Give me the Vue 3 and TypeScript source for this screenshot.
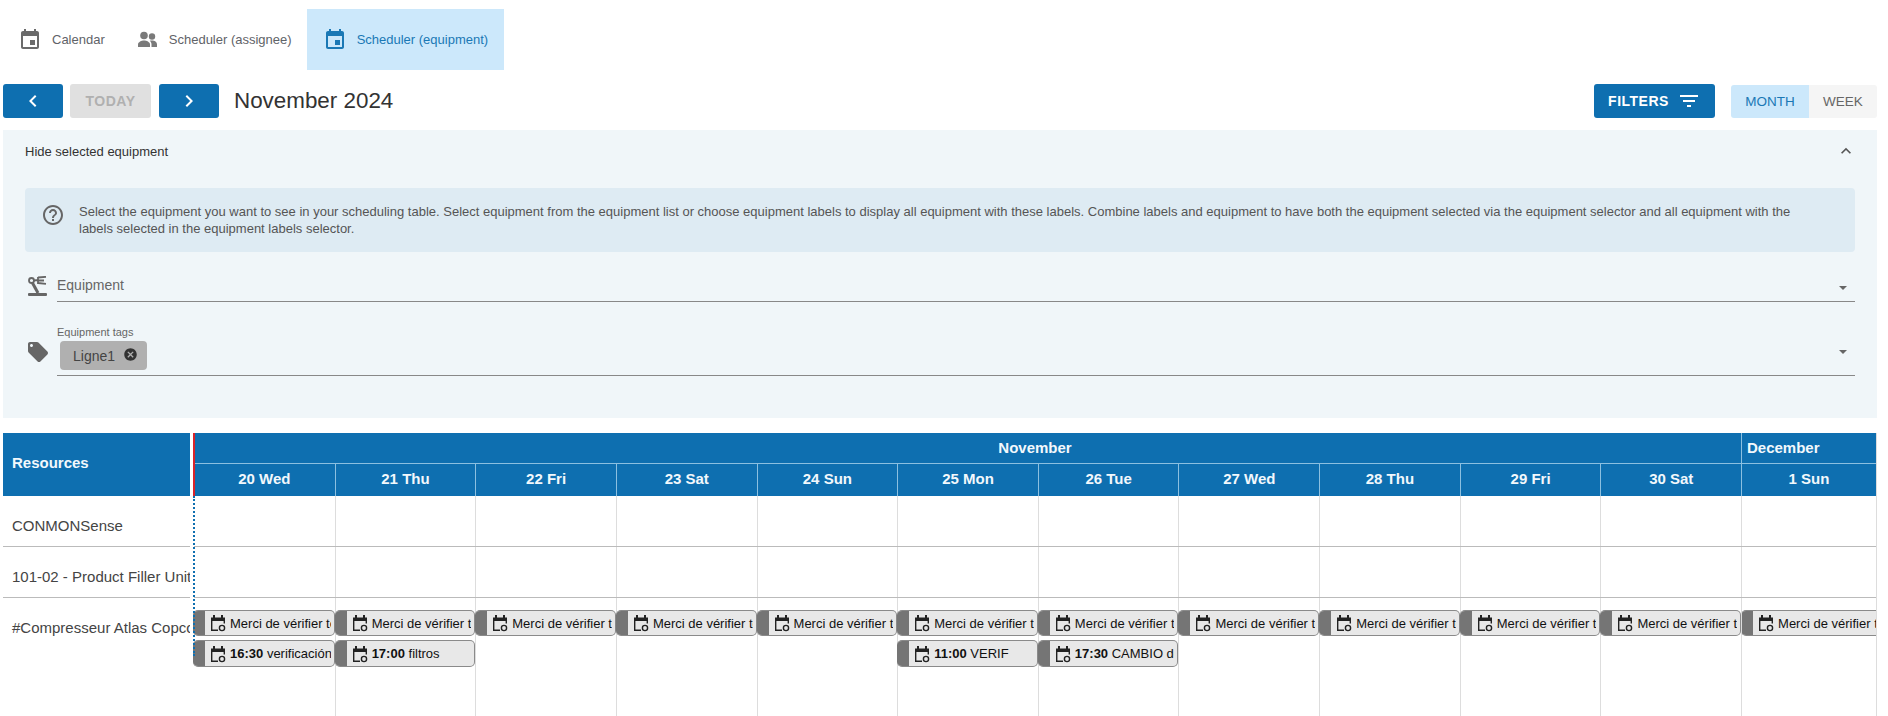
<script setup lang="ts">
interface Evt { time?: string; label: string }

const tabs = [
  { label: 'Calendar', icon: 'event' },
  { label: 'Scheduler (assignee)', icon: 'people' },
  { label: 'Scheduler (equipment)', icon: 'event', active: true },
]
const days = ['20 Wed', '21 Thu', '22 Fri', '23 Sat', '24 Sun', '25 Mon', '26 Tue', '27 Wed', '28 Thu', '29 Fri', '30 Sat', '1 Sun']
const resources = ['CONMONSense', '101-02 - Product Filler Unit', '#Compresseur Atlas Copco']

const reminder: Evt = { label: 'Merci de vérifier tous les filtres' }
const extras: Record<number, Evt> = {
  0: { time: '16:30', label: 'verificación' },
  1: { time: '17:00', label: 'filtros' },
  5: { time: '11:00', label: 'VERIF' },
  6: { time: '17:30', label: 'CAMBIO de aceite' },
}

function eventsFor(row: number, col: number): Evt[] {
  if (row !== 2) return []
  return extras[col] ? [reminder, extras[col]] : [reminder]
}
</script>

<template>
  <div class="page">
    <!-- tabs -->
    <nav class="tabs">
      <div v-for="t in tabs" :key="t.label" class="tab" :class="{ active: t.active }">
        <svg v-if="t.icon === 'event'" class="tab-icon" viewBox="0 0 24 24"><path d="M17 12h-5v5h5v-5zM16 1v2H8V1H6v2H5c-1.11 0-1.99.9-1.99 2L3 19c0 1.1.89 2 2 2h14c1.1 0 2-.9 2-2V5c0-1.1-.9-2-2-2h-1V1h-2zm3 18H5V8h14v11z" /></svg>
        <svg v-else class="tab-icon people" viewBox="0 0 24 24">
          <circle cx="9" cy="7.500" r="3.800" />
          <circle cx="17" cy="8.500" r="3.200" />
          <path d="M3 19v-2.500c0-2.500 3.500-4 6-4s6 1.500 6 4V19z" />
          <path d="M16.500 19v-2.500c0-1.500-.6-2.800-1.700-3.700.6-.2 1.400-.3 2.200-.3 2.500 0 5 1.500 5 3.900V19z" />
        </svg>
        <span>{{ t.label }}</span>
      </div>
    </nav>

    <!-- toolbar -->
    <div class="toolbar">
      <button class="btn nav-btn"><svg viewBox="0 0 24 24"><path d="M15.41 7.41 14 6l-6 6 6 6 1.41-1.41L10.83 12z" /></svg></button>
      <button class="btn today" disabled>TODAY</button>
      <button class="btn nav-btn"><svg viewBox="0 0 24 24"><path d="M10 6 8.59 7.41 13.17 12l-4.58 4.59L10 18l6-6z" /></svg></button>
      <div class="title">November 2024</div>
      <button class="btn filters">
        FILTERS
        <svg viewBox="0 0 24 24"><path d="M10 18h4v-2h-4v2zM3 6v2h18V6H3zm3 7h12v-2H6v2z" /></svg>
      </button>
      <div class="toggle">
        <span class="on">MONTH</span>
        <span>WEEK</span>
      </div>
    </div>

    <!-- equipment panel -->
    <section class="panel">
      <div class="panel-head">
        <span>Hide selected equipment</span>
        <svg viewBox="0 0 24 24"><path d="M12 8l-6 6 1.41 1.41L12 10.83l4.59 4.58L18 14z" /></svg>
      </div>
      <div class="info">
        <svg viewBox="0 0 24 24"><path d="M11 18h2v-2h-2v2zm1-16C6.48 2 2 6.48 2 12s4.48 10 10 10 10-4.48 10-10S17.52 2 12 2zm0 18c-4.41 0-8-3.59-8-8s3.59-8 8-8 8 3.59 8 8-3.59 8-8 8zm0-14c-2.21 0-4 1.79-4 4h2c0-1.1.9-2 2-2s2 .9 2 2c0 2-3 1.75-3 5h2c0-2.25 3-2.5 3-5 0-2.21-1.79-4-4-4z" /></svg>
        <p>Select the equipment you want to see in your scheduling table. Select equipment from the equipment list or choose equipment labels to display all equipment with these labels. Combine labels and equipment to have both the equipment selected via the equipment selector and all equipment with the labels selected in the equipment labels selector.</p>
      </div>
      <div class="field field-equipment">
        <svg class="field-icon robot" viewBox="0 0 20 20">
          <circle cx="4.500" cy="4.500" r="2.500" />
          <path class="robot-arm" d="M5.500 7l5.500 10" />
          <path d="M7 4.500l4-.5M11 1v7M11 1.500l8-.7M11 4.500l6 0M11 7l8 .8" />
          <rect class="robot-base" x="1" y="17" width="19" height="3" rx="1" />
        </svg>
        <div class="control">
          <span class="placeholder">Equipment</span>
          <i class="caret"></i>
        </div>
      </div>
      <div class="field field-tags">
        <svg class="field-icon" viewBox="0 0 24 24"><path d="M21.41 11.58l-9-9C12.05 2.22 11.55 2 11 2H4c-1.1 0-2 .9-2 2v7c0 .55.22 1.05.59 1.42l9 9c.36.36.86.58 1.41.58.55 0 1.05-.22 1.41-.59l7-7c.37-.36.59-.86.59-1.41 0-.55-.23-1.06-.59-1.42zM5.5 7C4.67 7 4 6.33 4 5.5S4.67 4 5.5 4 7 4.67 7 5.5 6.33 7 5.5 7z" /></svg>
        <div class="control control-tags">
          <label>Equipment tags</label>
          <span class="chip">
            Ligne1
            <svg viewBox="0 0 24 24"><path d="M12 2C6.47 2 2 6.47 2 12s4.47 10 10 10 10-4.47 10-10S17.53 2 12 2zm5 13.59L15.59 17 12 13.41 8.41 17 7 15.59 10.59 12 7 8.41 8.41 7 12 10.59 15.59 7 17 8.41 13.41 12 17 15.59z" /></svg>
          </span>
          <i class="caret"></i>
        </div>
      </div>
    </section>

    <!-- scheduler table -->
    <section class="sched">
      <div class="res-col">
        <div class="res-head">Resources</div>
        <div v-for="r in resources" :key="r" class="res-row">{{ r }}</div>
      </div>
      <div class="timeline">
        <div class="now-head"></div>
        <div class="now-line"></div>
        <div class="month-row">
          <div class="month-nov">November</div>
          <div class="month-dec">December</div>
        </div>
        <div class="grid day-row">
          <div v-for="d in days" :key="d" class="day">{{ d }}</div>
        </div>
        <div v-for="(r, ri) in resources" :key="r" class="grid body-row">
          <div v-for="(d, ci) in days" :key="d" class="cell">
            <div v-for="(e, ei) in eventsFor(ri, ci)" :key="ei" class="evt">
              <i class="evt-bar"></i>
              <svg class="evt-icon" viewBox="0 0 16 18">
                <path class="cal-top" d="M1 3.500h2V1h2v2.500h6V1h2v2.500h2v3.500H1z" />
                <path class="cal-line" d="M1.700 6v10.300H8M14.300 6v3.500" />
                <circle class="cal-line" cx="12" cy="14" r="2.600" />
              </svg>
              <span class="evt-text"><b v-if="e.time">{{ e.time + ' ' }}</b>{{ e.label }}</span>
            </div>
          </div>
        </div>
      </div>
    </section>
  </div>
</template>

<style>
html, body { margin: 0; background: #fff; overflow: hidden; }
</style>

<style scoped>
.page {
  width: 1888px;
  height: 716px;
  padding-top: 9px;
  box-sizing: border-box;
  overflow: hidden;
  font-family: "Liberation Sans", Arial, sans-serif;
  font-size: 13px;
  color: #333;
  background: #fff;
}

/* tabs */
.tabs { display: flex; height: 61px; }
.tab {
  display: flex;
  align-items: center;
  gap: 10px;
  padding: 0 16px;
  color: #5f6368;
}
.tab:first-child { padding: 0 14px 0 18px; }
.tab:nth-child(2) { padding-right: 15px; }
.tab-icon { width: 24px; height: 24px; fill: #6b6b6b; }
.tab-icon.people { fill: #7a7a7a; }
.tab.active { background: #cce8fb; color: #1a78b5; }
.tab.active .tab-icon { fill: #1a78b5; }

/* toolbar */
.toolbar { display: flex; align-items: center; height: 34px; margin-top: 14px; padding: 0 11px 0 3px; }
.btn {
  height: 34px;
  border: 0;
  border-radius: 3px;
  background: #0e6fb0;
  color: #fff;
  font-family: inherit;
  font-size: 14px;
  font-weight: 700;
  letter-spacing: .5px;
  display: flex;
  align-items: center;
  justify-content: center;
  padding: 0;
}
.nav-btn { width: 60px; }
.nav-btn svg { width: 24px; height: 24px; fill: #fff; }
.today { width: 81px; margin: 0 8px 0 7px; background: #e0e0e0; color: #b0b0b0; }
.title { margin-left: 15px; font-size: 22.4px; color: #333; }
.filters { width: 121px; margin-left: auto; gap: 8px; }
.filters svg { width: 24px; height: 24px; fill: #fff; }
.toggle { display: flex; height: 33px; margin-left: 16px; font-size: 13.5px; line-height: 33px; text-align: center; }
.toggle span { width: 68px; background: #f5f5f5; color: #666; border-radius: 0 3px 3px 0; }
.toggle .on { width: 78px; background: #cce8fb; color: #1a78b5; border-radius: 3px 0 0 3px; }

/* panel */
.panel { margin: 12px 11px 0 3px; height: 288px; padding: 0 22px; background: #f0f6f9; box-sizing: border-box; }
.panel-head { height: 42px; display: flex; align-items: center; justify-content: space-between; color: #333; }
.panel-head svg { width: 20px; height: 20px; fill: #555; margin-right: -1px; }
.info {
  display: flex;
  align-items: center;
  gap: 14px;
  height: 64px;
  margin: 16px 0 0;
  padding: 0 40px 0 16px;
  border-radius: 4px;
  background: #deebf3;
  color: #555;
}
.info svg { width: 24px; height: 24px; flex: none; fill: #666; margin-top: -10px; }
.info p { margin: 0; line-height: 17px; }

.field { display: flex; position: relative; }
.field-icon { width: 24px; height: 24px; flex: none; fill: #666; margin-left: 1px; margin-right: 7px; }
.field-equipment { margin-top: 20px; height: 30px; }
.field-tags { margin-top: 25px; height: 49px; }
.field-tags .field-icon { margin-top: 13px; }
.robot { width: 20px; height: 20px; margin: 4px 10px 0 2px; fill: none; stroke: #666; stroke-width: 1.800; }
.robot-arm { stroke-width: 3; }
.robot-base { fill: #666; stroke: none; }
.control { flex: 1; position: relative; border-bottom: 1px solid #888; display: flex; align-items: center; }
.placeholder { font-size: 14px; color: #666; padding-bottom: 3px; }
.control-tags { display: block; }
.control-tags label { display: block; margin-top: -1px; font-size: 11px; line-height: 13px; color: #666; }
.chip {
  display: inline-flex;
  align-items: center;
  gap: 8px;
  height: 29px;
  margin: 2px 0 0 3px;
  padding: 0 9px 0 13px;
  box-sizing: border-box;
  border-radius: 4px;
  background: #b0b0b0;
  color: #444;
  font-size: 14px;
}
.chip svg { width: 15px; height: 15px; fill: #333; margin-top: -3px; }
.caret {
  position: absolute;
  right: 8px;
  top: 50%;
  margin-top: -1px;
  border: 4px solid transparent;
  border-top: 4px solid #666;
  border-bottom: 0;
}

/* scheduler */
.sched { display: flex; margin: 15px 11px 0 3px; }
.res-col { width: 187px; flex: none; overflow: hidden; }
.res-head {
  height: 63px;
  padding-left: 9px;
  box-sizing: border-box;
  line-height: 60px;
  background: #0e6fb0;
  color: #f2f8fc;
  font-size: 15px;
  font-weight: 700;
}
.res-row {
  height: 51px;
  padding: 20px 0 0 9px;
  box-sizing: border-box;
  border-bottom: 1px solid #bbb;
  font-size: 15px;
  line-height: 20px;
  color: #444;
  white-space: nowrap;
}
.res-row:last-child { border-bottom: 0; height: 160px; }

.timeline { flex: 1; margin-left: 4px; position: relative; border-right: 1px solid #ddd; min-width: 0; }
.now-head {
  position: absolute;
  z-index: 3;
  left: -1px;
  top: 0;
  width: 2px;
  height: 63px;
  background: #d8232a;
}
.now-line {
  position: absolute;
  z-index: 3;
  left: -1px;
  top: 63px;
  border-left: 2px dotted #0e6fb0;
  height: 160px;
}
.grid { display: grid; grid-template-columns: repeat(11, 140.65px) 1fr; }
.month-row { display: flex; height: 31px; background: #0e6fb0; color: #f2f8fc; font-size: 15px; font-weight: 700; line-height: 29px; border-bottom: 1px solid #8cc0e0; box-sizing: border-box; }
.month-nov { width: 1548px; text-align: center; padding-left: 135px; box-sizing: border-box; border-right: 1px solid #8cc0e0; }
.month-dec { padding-left: 5px; }
.day-row { height: 32px; background: #0e6fb0; }
.day {
  border-left: 1px solid #8cc0e0;
  color: #f2f8fc;
  font-size: 15px;
  font-weight: 700;
  line-height: 30px;
  text-align: center;
}
.day:first-child { border-left: 0; }
.body-row { height: 51px; border-bottom: 1px solid #bbb; box-sizing: border-box; }
.body-row:last-child { border-bottom: 0; height: 160px; }
.cell { border-left: 1px solid #ddd; min-width: 0; }
.cell:first-child { border-left: 0; }
.cell:last-child { overflow: hidden; }
.body-row:last-child .cell { padding-top: 12px; }

.evt {
  display: flex;
  align-items: center;
  height: 26px;
  margin: 0 0 4px -1px;
  border: 1px solid #8a8a8a;
  border-left: 0;
  border-radius: 5px;
  background: #e8e8e8;
  box-sizing: border-box;
  overflow: hidden;
}
.evt + .evt { height: 27px; }
.cell:last-child .evt { margin-right: -8px; }
.evt-bar { width: 12px; align-self: stretch; flex: none; background: #757575; }
.evt-icon { width: 16px; height: 18px; flex: none; margin: 0 4px 0 5px; }
.cal-top { fill: #222; }
.cal-line { fill: none; stroke: #222; stroke-width: 1.4; }
.evt-text {
  flex: 1;
  min-width: 0;
  margin-right: 3px;
  overflow: hidden;
  white-space: nowrap;
  font-size: 13px;
  color: #111;
}
</style>
